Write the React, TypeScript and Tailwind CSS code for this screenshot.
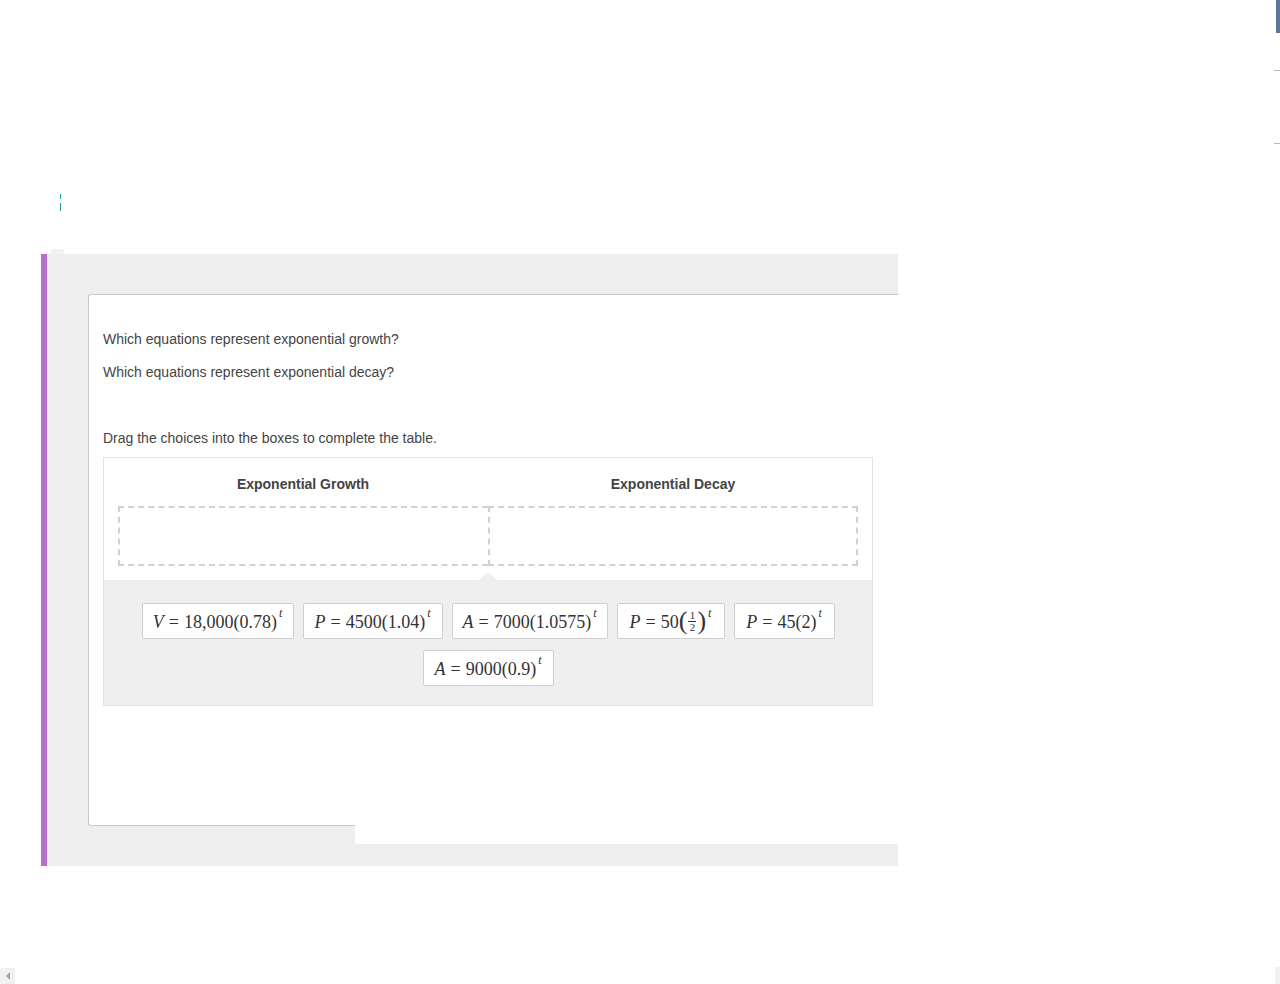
import React from 'react'

type Choice = { id: string; w: string; v: string; coef: React.ReactNode; base: React.ReactNode }

function Sup() {
  return <span className="relative top-[-9px] ml-[2px] text-[12px] italic leading-none">t</span>
}

function Half() {
  return (
    <span className="inline-flex items-center">
      <span className="text-[26px] leading-none relative top-[-1px]">(</span>
      <span className="inline-flex flex-col items-center text-[11px] leading-[11px] mx-[1px]">
        <span>1</span>
        <span className="border-t border-[#333] w-[8px] text-center">2</span>
      </span>
      <span className="text-[26px] leading-none relative top-[-1px]">)</span>
    </span>
  )
}

const choices: Choice[] = [
  { id: 'a', w: 'w-[152px]', v: 'V', coef: '18,000', base: '(0.78)' },
  { id: 'b', w: 'w-[140px]', v: 'P', coef: '4500', base: '(1.04)' },
  { id: 'c', w: 'w-[156px]', v: 'A', coef: '7000', base: '(1.0575)' },
  { id: 'd', w: 'w-[108px]', v: 'P', coef: '50', base: <Half /> },
  { id: 'e', w: 'w-[101px]', v: 'P', coef: '45', base: '(2)' },
  { id: 'f', w: 'w-[131px]', v: 'A', coef: '9000', base: '(0.9)' },
]

function ChoiceTile({ c }: { c: Choice }) {
  return (
    <div
      className={`${c.w} h-[36px] bg-white border border-[#cfcfcf] rounded-[2px] flex items-center justify-center text-[18px] text-[#333] pt-[1px]`}
      style={{ fontFamily: '"Liberation Serif", "DejaVu Serif", serif' }}
    >
      <span className="italic">{c.v}</span>
      <span className="mx-[5px]">=</span>
      <span>{c.coef}</span>
      <span className="inline-flex items-center">{c.base}</span>
      <Sup />
    </div>
  )
}

export default function App() {
  return (
    <div
      className="relative w-[1280px] h-[984px] overflow-hidden bg-white text-[#444]"
      style={{ fontFamily: '"Liberation Sans", Arial, sans-serif' }}
    >
      {/* stray chrome on the right edge */}
      <div className="absolute right-0 top-0 w-[4px] h-[33px] bg-[#5d7596]" />
      <div className="absolute right-0 top-[70px] w-[6px] h-px bg-[#bbb]" />
      <div className="absolute right-0 top-[143px] w-[6px] h-px bg-[#bbb]" />

      {/* teal marks */}
      <div className="pt-[194px] pl-[60px] flex flex-col gap-[4px] h-[249px]">
        <div className="w-px h-[5px] bg-[#2a9a9a]" />
        <div className="w-px h-[8px] bg-[#2a9a9a]" />
      </div>

      <div className="ml-[51px] w-[13px] h-[5px] bg-[#f2f2f2]" />

      <div className="ml-[41px] w-[857px] h-[612px] flex">
        <div className="w-[6px] bg-[#b470cf]" />
        <div className="flex-1 bg-[#eeeeee] pl-[41px] pt-[40px] flex flex-col">
          <div className="h-[532px] bg-white border border-r-0 border-[#c8c8c8] rounded-l-[3px] pl-[14px] pt-[34px] text-[14px] leading-[20px]">
            <p>Which equations represent exponential growth?</p>
            <p className="mt-[13px]">Which equations represent exponential decay?</p>
            <p className="mt-[46px]">Drag the choices into the boxes to complete the table.</p>

            <div className="mt-[9px] w-[770px] border border-[#e2e2e2]">
              <div className="grid grid-cols-2 px-[14px] pt-[16px] pb-[12px] font-bold text-[#444]">
                <div className="text-center">Exponential Growth</div>
                <div className="text-center">Exponential Decay</div>
              </div>
              <div className="px-[14px] grid grid-cols-2">
                <div className="h-[60px] border-2 border-r-0 border-dashed border-[#d0d0d0]" />
                <div className="h-[60px] border-2 border-dashed border-[#d0d0d0]" />
              </div>
              <div className="h-[14px] flex justify-center items-end">
                <div className="w-0 h-0 border-l-[10px] border-r-[10px] border-b-[8px] border-l-transparent border-r-transparent border-b-[#efefef]" />
              </div>
              <div className="bg-[#efefef] pt-[23px] pb-[19px] flex flex-wrap justify-center gap-x-[9px] gap-y-[11px] px-[37px]">
                {choices.map((c) => (
                  <ChoiceTile key={c.id} c={c} />
                ))}
              </div>
            </div>
          </div>
          <div className="relative -mt-px ml-[267px] h-[19px] bg-white" />
        </div>
      </div>

      {/* horizontal scrollbar bits */}
      <div className="absolute left-0 bottom-0 w-[15px] h-[16px] bg-[#f1f1f1] flex items-center justify-center">
        <div className="w-0 h-0 border-t-[4px] border-b-[4px] border-r-[4px] border-t-transparent border-b-transparent border-r-[#a3a3a3]" />
      </div>
      <div className="absolute right-0 bottom-0 w-[5px] h-[17px] bg-[#f1f1f1]" />
    </div>
  )
}
